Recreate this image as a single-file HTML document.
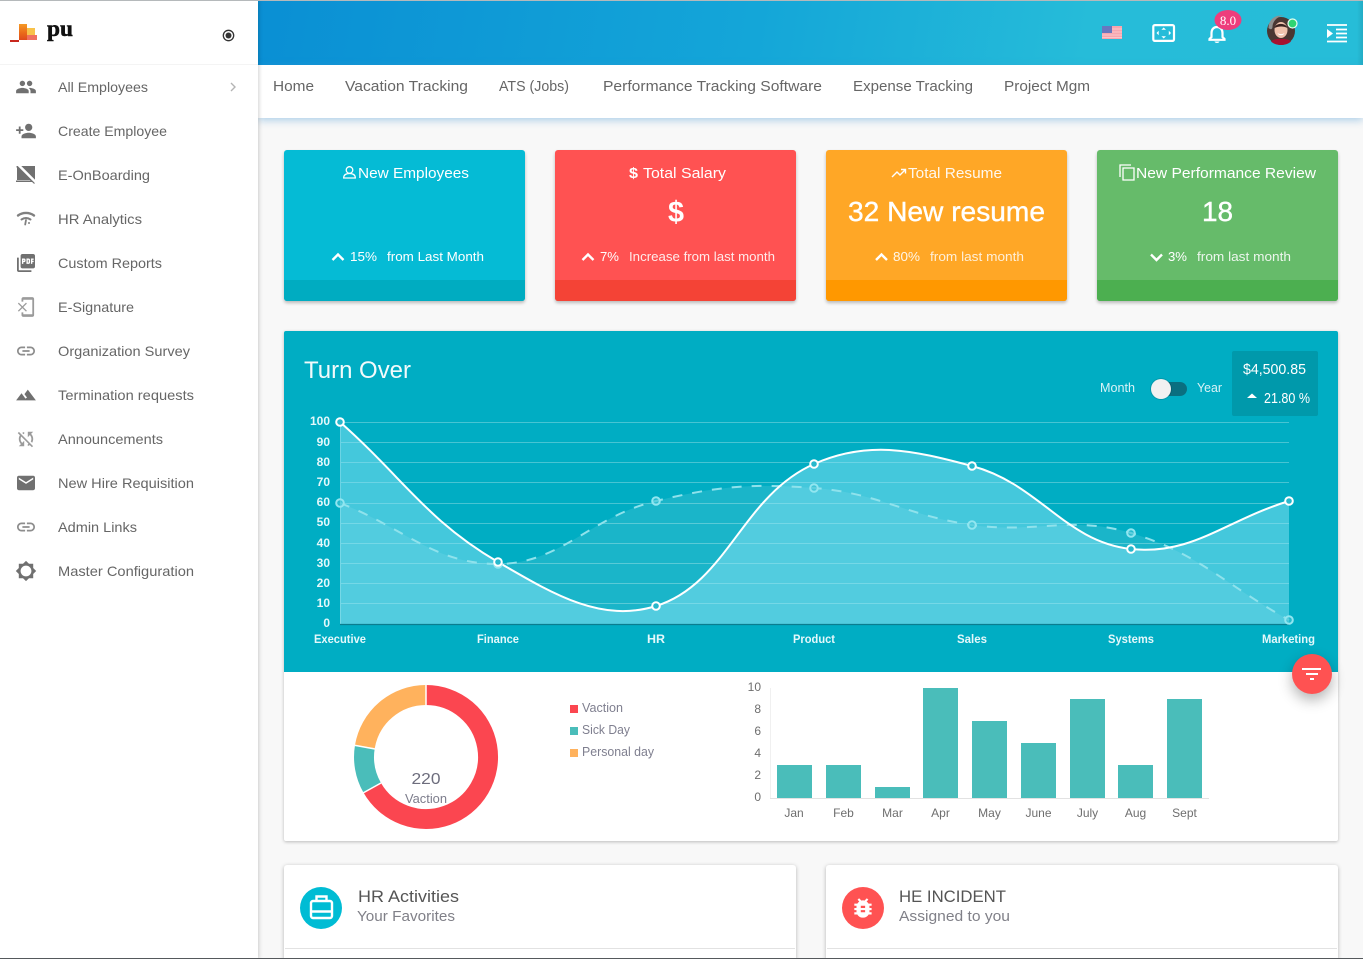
<!DOCTYPE html>
<html lang="en">
<head>
<meta charset="utf-8">
<title>HR Dashboard</title>
<style>
html,body{margin:0;padding:0;width:1363px;height:959px;overflow:hidden;background:#f8f8f8;font-family:"Liberation Sans",sans-serif}
#page{position:relative;width:1363px;height:959px;overflow:hidden;background:#f8f8f8}
.a{position:absolute}
#hdr{left:258px;top:0;width:1105px;height:65px;background:linear-gradient(100deg,#0a8fd4 0%,#14a6d8 45%,#26bcd9 75%,#26bdd8 100%)}
#nav{left:258px;top:65px;width:1105px;height:53px;background:#fff;box-shadow:0 2px 8px rgba(70,150,210,.45)}
#side{left:0;top:0;width:258px;height:959px;background:#fff;box-shadow:1px 0 4px rgba(0,0,0,.18)}
.card{width:241px;height:151px;top:150px;border-radius:3px;overflow:hidden;box-shadow:0 2px 3px rgba(0,0,0,.25)}
.card i{position:absolute;left:0;right:0;bottom:0;height:21px;display:block}
#panel{left:284px;top:331px;width:1054px;height:510px;background:#fff;border-radius:2px;box-shadow:0 1px 3px rgba(0,0,0,.25)}
#teal{left:284px;top:331px;width:1054px;height:341px;background:#00adc3;border-radius:2px 2px 0 0}
#stat{left:1232px;top:351px;width:86px;height:65px;background:#0099ab;border-radius:2px}
#fab{left:1292px;top:654px;width:40px;height:40px;border-radius:50%;background:#ff5252;box-shadow:0 6px 14px rgba(0,0,0,.3)}
.low{top:865px;width:512px;height:90px;background:#fff;border-radius:3px 3px 0 0;box-shadow:0 1px 4px rgba(0,0,0,.28)}
#edge{left:1357px;top:0;width:6px;height:65px;background:linear-gradient(90deg,rgba(0,0,0,0),rgba(0,0,0,.09))}
#top{left:0;top:0;width:1363px;height:1px;background:#b5b9bb}
#bot{left:0;top:958px;width:1363px;height:1px;background:#55595c}
svg{position:absolute;left:0;top:0}
.s text{font-size:14px;fill:#666}
.n text{font-size:15px;fill:#666}
.w text{fill:#fff}
.ax text{font-size:12px;font-weight:bold;fill:#e4f8fb}
.bx text{font-size:12px;fill:#6e6e6e}
</style>
</head>
<body>
<div id="page">
<div class="a" id="hdr"></div>
<div class="a" id="edge"></div>
<div class="a" id="nav"></div>
<div class="a" id="side"></div>
<div class="a card" style="left:284px;background:#05bbd5"><i style="background:#00acc1"></i></div>
<div class="a card" style="left:555px;background:#ff5252"><i style="background:#f44336"></i></div>
<div class="a card" style="left:826px;background:#ffa726"><i style="background:#ff9800"></i></div>
<div class="a card" style="left:1097px;background:#66bb6a"><i style="background:#4caf50"></i></div>
<div class="a" id="panel"></div>
<div class="a" id="teal"></div>
<div class="a" id="stat"></div>
<div class="a low" style="left:284px;height:94px"></div>
<div class="a low" style="left:826px;height:94px"></div>
<div class="a" style="left:285px;top:948px;width:510px;height:1px;background:#e2e2e2"></div>
<div class="a" style="left:827px;top:948px;width:510px;height:1px;background:#e2e2e2"></div>
<div class="a" id="fab"></div>

<svg width="1363" height="959" viewBox="0 0 1363 959" xmlns="http://www.w3.org/2000/svg">
<defs>
<linearGradient id="lg" x1="0" y1="0" x2="0" y2="1"><stop offset="0" stop-color="#f59a25"/><stop offset=".55" stop-color="#ea6a1a"/><stop offset="1" stop-color="#df4a1c"/></linearGradient>
</defs>
<!-- logo -->
<g>
<rect x="10" y="40" width="9" height="2" fill="#c8281e"/>
<rect x="19" y="24" width="8" height="16" fill="url(#lg)"/>
<rect x="27" y="28" width="8" height="7" fill="#f8c24a"/>
<rect x="27" y="35" width="10" height="5" fill="#f0705f"/>
<text x="47" y="36" font-family="'Liberation Serif',serif" font-weight="bold" font-size="23" fill="#111" stroke="#111" stroke-width=".5" textLength="26" lengthAdjust="spacingAndGlyphs">pu</text>
</g>
<circle cx="228.5" cy="35.5" r="5.2" fill="none" stroke="#333" stroke-width="1.3"/>
<circle cx="228.5" cy="35.5" r="3" fill="#333"/>
<rect x="0" y="64" width="258" height="1" fill="#f4f4f4"/>

<!-- sidebar text -->
<g class="s">
<text x="58" y="92" textLength="90" lengthAdjust="spacingAndGlyphs">All Employees</text>
<text x="58" y="136" textLength="109" lengthAdjust="spacingAndGlyphs">Create Employee</text>
<text x="58" y="180" textLength="92" lengthAdjust="spacingAndGlyphs">E-OnBoarding</text>
<text x="58" y="224" textLength="84" lengthAdjust="spacingAndGlyphs">HR Analytics</text>
<text x="58" y="268" textLength="104" lengthAdjust="spacingAndGlyphs">Custom Reports</text>
<text x="58" y="312" textLength="76" lengthAdjust="spacingAndGlyphs">E-Signature</text>
<text x="58" y="356" textLength="132" lengthAdjust="spacingAndGlyphs">Organization Survey</text>
<text x="58" y="400" textLength="136" lengthAdjust="spacingAndGlyphs">Termination requests</text>
<text x="58" y="444" textLength="105" lengthAdjust="spacingAndGlyphs">Announcements</text>
<text x="58" y="488" textLength="136" lengthAdjust="spacingAndGlyphs">New Hire Requisition</text>
<text x="58" y="532" textLength="79" lengthAdjust="spacingAndGlyphs">Admin Links</text>
<text x="58" y="576" textLength="136" lengthAdjust="spacingAndGlyphs">Master Configuration</text>
</g>
<path d="M231 83l4 4-4 4" fill="none" stroke="#b4b4b4" stroke-width="1.4"/>

<!-- sidebar icons -->
<g fill="#707070">
<path transform="translate(15.2 76.2) scale(.9)" d="M16 11c1.66 0 2.99-1.34 2.99-3S17.66 5 16 5c-1.66 0-3 1.34-3 3s1.34 3 3 3zm-8 0c1.66 0 2.99-1.34 2.99-3S9.66 5 8 5C6.34 5 5 6.34 5 8s1.34 3 3 3zm0 2c-2.33 0-7 1.17-7 3.5V19h14v-2.5c0-2.33-4.67-3.5-7-3.5zm8 0c-.29 0-.62.02-.97.05 1.16.84 1.97 1.97 1.97 3.45V19h6v-2.5c0-2.33-4.67-3.5-7-3.5z"/>
<path transform="translate(15.2 120.2) scale(.9)" d="M15 12c2.21 0 4-1.79 4-4s-1.79-4-4-4-4 1.79-4 4 1.79 4 4 4zm-9-2V7H4v3H1v2h3v3h2v-3h3v-2H6zm9 4c-2.67 0-8 1.34-8 4v2h16v-2c0-2.66-5.33-4-8-4z"/>
<g>
<rect x="17" y="166" width="18" height="14" fill="#707070"/>
<rect x="16" y="180.500" width="20" height="1.500" fill="#707070"/>
<path d="M18 164.500l18 18" stroke="#fff" stroke-width="2.600"/>
<path d="M16.500 166.500l18 17" stroke="#707070" stroke-width="1.200"/>
</g>
<g fill="none" stroke="#808080" stroke-linecap="round">
<path d="M18 215.500c4.500-3.400 11.500-3.400 16 0" stroke-width="2.400"/>
<path d="M21.500 219.500c2.800-1.900 6.200-1.900 9 0" stroke-width="2"/>
<path d="M26 220l-.8 4.500" stroke-width="1.800"/>
<circle cx="29" cy="223" r=".5" stroke-width="1"/>
</g>
<path transform="translate(15.2 252.2) scale(.9)" d="M20 2H8c-1.1 0-2 .9-2 2v12c0 1.1.9 2 2 2h12c1.1 0 2-.9 2-2V4c0-1.1-.9-2-2-2zm-8.5 7.5c0 .83-.67 1.5-1.5 1.5H9v2H7.5V7H10c.83 0 1.5.67 1.5 1.5v1zm5 2c0 .83-.67 1.5-1.5 1.5h-2.5V7H15c.83 0 1.5.67 1.5 1.5v3zm4-3H19v1h1.5V11H19v2h-1.5V7h3v1.5zM9 9.5h1v-1H9v1zM4 6H2v14c0 1.1.9 2 2 2h14v-2H4V6zm10 5.5h1v-3h-1v3z"/>
<path opacity=".7" transform="translate(15.2 296.2) scale(.9)" d="M13 8.2l-1-1-4 4-4-4-1 1 4 4-4 4 1 1 4-4 4 4 1-1-4-4 4-4zM19 1H9c-1.1 0-2 .9-2 2v3h2V4h10v16H9v-2H7v3c0 1.1.9 2 2 2h10c1.1 0 2-.9 2-2V3c0-1.1-.9-2-2-2z"/>
<path opacity=".8" transform="translate(15.2 340.2) scale(.9)" d="M3.9 12c0-1.71 1.39-3.1 3.1-3.1h4V7H7c-2.76 0-5 2.24-5 5s2.24 5 5 5h4v-1.9H7c-1.71 0-3.1-1.39-3.1-3.1zM8 13h8v-2H8v2zm9-6h-4v1.9h4c1.71 0 3.1 1.39 3.1 3.1s-1.39 3.1-3.1 3.1h-4V17h4c2.76 0 5-2.24 5-5s-2.24-5-5-5z"/>
<path transform="translate(15.2 384.2) scale(.9)" d="M14 6l-3.75 5 2.85 3.8-1.6 1.2C9.81 13.75 7 10 7 10l-6 8h22L14 6z"/>
<path opacity=".7" transform="translate(15.2 428.2) scale(.9)" d="M10 6.35V4.26c-.8.21-1.55.54-2.23.96l1.46 1.46c.25-.12.5-.24.77-.33zm-7.14-.94l2.36 2.36C4.45 8.99 4 10.44 4 12c0 2.21.91 4.2 2.36 5.64L4 20h6v-6l-2.24 2.24C6.68 15.15 6 13.66 6 12c0-1 .25-1.94.68-2.77l8.08 8.08c-.25.13-.5.25-.77.34v2.09c.8-.21 1.55-.54 2.23-.96l2.36 2.36 1.27-1.27L4.14 4.14 2.86 5.41zM20 4h-6v6l2.24-2.24C17.32 8.85 18 10.34 18 12c0 1-.25 1.94-.68 2.77l1.46 1.46C19.55 15.01 20 13.56 20 12c0-2.21-.91-4.2-2.36-5.64L20 4z"/>
<path transform="translate(15.2 472.2) scale(.9)" d="M20 4H4c-1.1 0-1.99.9-1.99 2L2 18c0 1.1.9 2 2 2h16c1.1 0 2-.9 2-2V6c0-1.1-.9-2-2-2zm0 4l-8 5-8-5V6l8 5 8-5v2z"/>
<path opacity=".8" transform="translate(15.2 516.2) scale(.9)" d="M3.9 12c0-1.71 1.39-3.1 3.1-3.1h4V7H7c-2.76 0-5 2.24-5 5s2.24 5 5 5h4v-1.9H7c-1.71 0-3.1-1.39-3.1-3.1zM8 13h8v-2H8v2zm9-6h-4v1.9h4c1.71 0 3.1 1.39 3.1 3.1s-1.39 3.1-3.1 3.1h-4V17h4c2.76 0 5-2.24 5-5s-2.24-5-5-5z"/>
<path transform="translate(15.2 560.2) scale(.9)" d="M20 8.69V4h-4.69L12 .69 8.69 4H4v4.69L.69 12 4 15.31V20h4.69L12 23.31 15.31 20H20v-4.69L23.31 12 20 8.69zM12 18c-3.31 0-6-2.69-6-6s2.69-6 6-6 6 2.69 6 6-2.69 6-6 6z"/>
</g>

<!-- header icons -->
<g>
<rect x="1102" y="26" width="20" height="13" fill="#f8a5ae"/>
<rect x="1102" y="28.500" width="20" height="1" fill="#fbc6cb"/>
<rect x="1102" y="31.500" width="20" height="1" fill="#fbc6cb"/>
<rect x="1102" y="34.500" width="20" height="1" fill="#fbc6cb"/>
<rect x="1102" y="37" width="20" height="1" fill="#fbc6cb"/>
<rect x="1102" y="26" width="10" height="7" fill="#6877bf"/>
<rect x="1153.300" y="25.100" width="20.700" height="15.800" rx="1.500" fill="none" stroke="#fff" stroke-width="2.200"/>
<path d="M1163.700 27.500l-2.300 2.200h4.600zM1163.700 38.500l-2.300-2.200h4.600zM1156.500 33l2.200-2.300v4.600zM1171 33l-2.200-2.300v4.600z" fill="#fff"/>
<path d="M1217 27c-3.600 0-5.500 2.700-5.500 6v4l-2 2v.8h15V39l-2-2v-4c0-3.300-1.900-6-5.500-6z" fill="none" stroke="#fff" stroke-width="2.200"/>
<path d="M1214.500 41.500h5c-.3 1-1.200 1.500-2.500 1.500s-2.200-.5-2.500-1.500z" fill="#fff"/>
<ellipse cx="1228" cy="20" rx="13.500" ry="10" fill="#ee3d7c"/>
<text x="1228" y="25" text-anchor="middle" font-family="'Liberation Serif',serif" font-size="13" fill="#fff">8.0</text>
<circle cx="1281" cy="31" r="14" fill="#4a3733"/>
<path d="M1268.500 28c0-8 6-12.500 12.500-12.500 2 0 3 .3 3 .3-5 0-11 4-11.500 11-.1 3-2 3-4 1.200z" fill="#8f8f8f"/>
<path d="M1271 41.500c2-3.500 18-3.500 20 0-2.500 2.300-6 3.500-10 3.500s-7.500-1.200-10-3.500z" fill="#a5122f"/>
<ellipse cx="1281" cy="30" rx="6.500" ry="8" fill="#efc2ad"/>
<path d="M1274.500 28c1-5.500 11.500-5.500 13 0-3.500-2-9-2-13 0z" fill="#3a2220"/>
<path d="M1277.500 33c2.300 1.500 4.700 1.500 7 0-1 3-6 3-7 0z" fill="#fff"/>
<circle cx="1292.500" cy="23.500" r="4.500" fill="#2ed573" stroke="#e8fff2" stroke-width="1.200"/>
<path d="M1327 25h20M1336 29.500h11M1336 33.500h11M1336 37.500h11M1327 41.500h20" stroke="#fff" stroke-width="1.800" fill="none"/>
<path d="M1327 29l6 4.500-6 4.500z" fill="#fff"/>
</g>

<!-- nav -->
<g class="n">
<text x="273" y="91" textLength="41" lengthAdjust="spacingAndGlyphs">Home</text>
<text x="345" y="91" textLength="123" lengthAdjust="spacingAndGlyphs">Vacation Tracking</text>
<text x="499" y="91" textLength="70" lengthAdjust="spacingAndGlyphs">ATS (Jobs)</text>
<text x="603" y="91" textLength="219" lengthAdjust="spacingAndGlyphs">Performance Tracking Software</text>
<text x="853" y="91" textLength="120" lengthAdjust="spacingAndGlyphs">Expense Tracking</text>
<text x="1004" y="91" textLength="86" lengthAdjust="spacingAndGlyphs">Project Mgm</text>
</g>

<!-- stat cards -->
<g class="w" font-size="15">
<circle cx="349.500" cy="170" r="3.300" fill="none" stroke="#fff" stroke-width="1.300"/>
<path d="M343.700 178c0-3.500 2.500-4.500 5.800-4.500s5.800 1 5.800 4.500z" fill="none" stroke="#fff" stroke-width="1.300"/>
<text x="358" y="178" textLength="111" lengthAdjust="spacingAndGlyphs">New Employees</text>
<text x="629" y="178" font-weight="bold" textLength="9" lengthAdjust="spacingAndGlyphs">$</text>
<text x="643" y="178" textLength="83" lengthAdjust="spacingAndGlyphs">Total Salary</text>
<path d="M892 177l5-5 3 3 5-5M901 169.500h4.500v4" fill="none" stroke="#fff" stroke-width="1.400"/>
<text x="908" y="178" opacity=".92" textLength="94" lengthAdjust="spacingAndGlyphs">Total Resume</text>
<path d="M1120 177v-12h11M1123 168h11v12h-11z" fill="none" stroke="#fff" stroke-width="1.300"/>
<text x="1136" y="178" textLength="180" lengthAdjust="spacingAndGlyphs">New Performance Review</text>

<text x="676" y="222" text-anchor="middle" font-size="30" font-weight="bold" textLength="16" lengthAdjust="spacingAndGlyphs">$</text>
<text x="848" y="221" font-size="28" textLength="197" lengthAdjust="spacingAndGlyphs" stroke="#fff" stroke-width=".4">32 New resume</text>
<text x="1202" y="221" font-size="28" textLength="31" lengthAdjust="spacingAndGlyphs" stroke="#fff" stroke-width=".4">18</text>

<g font-size="13">
<text x="350" y="261" textLength="27" lengthAdjust="spacingAndGlyphs">15%</text>
<text x="387" y="261" textLength="97" lengthAdjust="spacingAndGlyphs">from Last Month</text>
<text x="600" y="261" textLength="19" lengthAdjust="spacingAndGlyphs">7%</text>
<text x="629" y="261" opacity=".88" textLength="146" lengthAdjust="spacingAndGlyphs">Increase from last month</text>
<text x="893" y="261" opacity=".9" textLength="27" lengthAdjust="spacingAndGlyphs">80%</text>
<text x="930" y="261" opacity=".82" textLength="94" lengthAdjust="spacingAndGlyphs">from last month</text>
<text x="1168" y="261" textLength="19" lengthAdjust="spacingAndGlyphs">3%</text>
<text x="1197" y="261" opacity=".88" textLength="94" lengthAdjust="spacingAndGlyphs">from last month</text>
</g>
<g fill="none" stroke="#fff" stroke-width="2.400">
<path d="M332.500 260l5.500-5.500 5.500 5.500"/>
<path d="M582.500 260l5.500-5.500 5.500 5.500"/>
<path d="M876 260l5.500-5.500 5.500 5.500"/>
<path d="M1151 254.500l5.500 5.500 5.500-5.500"/>
</g>
</g>

<!-- turn over header -->
<g class="w">
<text x="304" y="378" font-size="24" opacity=".95" textLength="107" lengthAdjust="spacingAndGlyphs">Turn Over</text>
<text x="1100" y="392" font-size="12.500" opacity=".85" textLength="35" lengthAdjust="spacingAndGlyphs">Month</text>
<text x="1197" y="392" font-size="12.500" opacity=".85" textLength="25" lengthAdjust="spacingAndGlyphs">Year</text>
<rect x="1155" y="382" width="32" height="14" rx="7" fill="#0a6f80"/>
<circle cx="1161" cy="389" r="11" fill="#000" opacity=".12"/>
<circle cx="1161" cy="389" r="10" fill="#f1f1f1"/>
<text x="1243" y="374" font-size="14.500" textLength="63" lengthAdjust="spacingAndGlyphs">$4,500.85</text>
<path d="M1247 398l5-4.500 5 4.500z" fill="#fff"/>
<text x="1264" y="403" font-size="14.500" textLength="46" lengthAdjust="spacingAndGlyphs">21.80 %</text>
</g>

<!-- line chart -->
<g stroke="#fff" stroke-opacity=".28" stroke-width="1">
<path d="M340 422.500H1289M340 442.500H1289M340 462.500H1289M340 482.500H1289M340 503.500H1289M340 523.500H1289M340 543.500H1289M340 563.500H1289M340 583.500H1289M340 603.500H1289M340.500 422V624"/>
</g>
<path d="M340,503 C403.2,527.4 434.8,564.4 498,564 C561.2,563.6 590.6,516.7 656,501 C717,486.3 751.4,483.2 814,488 C877.8,492.8 908,515.9 972,525 C1034.8,533.9 1071.4,515.1 1131,533 C1198.2,553.1 1225.8,585.2 1289,620 L1289,624 L340,624Z" fill="#fff" fill-opacity=".1"/>
<path d="M340,422 C403.2,478 426.9,520.6 498,562 C553.3,594.2 601,623.1 656,606 C727.4,583.9 741.6,496.1 814,464 C868,440.1 912.7,450.1 972,466 C1039.5,484.1 1065.1,541.7 1131,549 C1191.9,555.7 1225.8,520.2 1289,501 L1289,624 L340,624Z" fill="#96e8fa" fill-opacity=".45"/>
<path d="M340,503 C403.2,527.4 434.8,564.4 498,564 C561.2,563.6 590.6,516.7 656,501 C717,486.3 751.4,483.2 814,488 C877.8,492.8 908,515.9 972,525 C1034.8,533.9 1071.4,515.1 1131,533 C1198.2,553.1 1225.8,585.2 1289,620" fill="none" stroke="#8fe2ec" stroke-width="2" stroke-dasharray="10 10"/>
<path d="M340,422 C403.2,478 426.9,520.6 498,562 C553.3,594.2 601,623.1 656,606 C727.4,583.9 741.6,496.1 814,464 C868,440.1 912.7,450.1 972,466 C1039.5,484.1 1065.1,541.7 1131,549 C1191.9,555.7 1225.8,520.2 1289,501" fill="none" stroke="#fff" stroke-width="2"/>
<path d="M340 624.500H1289" stroke="#0a7d8f" stroke-width="1.200"/>
<g fill="#3dc3d6" fill-opacity=".6" stroke="#92e6f0" stroke-width="2">
<circle cx="340" cy="503" r="3.800"/><circle cx="498" cy="564" r="3.800"/><circle cx="656" cy="501" r="3.800"/><circle cx="814" cy="488" r="3.800"/><circle cx="972" cy="525" r="3.800"/><circle cx="1131" cy="533" r="3.800"/><circle cx="1289" cy="620" r="3.800"/>
</g>
<g fill="#27b8cc" stroke="#fff" stroke-width="2">
<circle cx="340" cy="422" r="3.800"/><circle cx="498" cy="562" r="3.800"/><circle cx="656" cy="606" r="3.800"/><circle cx="814" cy="464" r="3.800"/><circle cx="972" cy="466" r="3.800"/><circle cx="1131" cy="549" r="3.800"/><circle cx="1289" cy="501" r="3.800"/>
</g>
<g class="ax" text-anchor="end">
<text x="330" y="425">100</text><text x="330" y="446">90</text><text x="330" y="466">80</text><text x="330" y="486">70</text><text x="330" y="506">60</text><text x="330" y="526">50</text><text x="330" y="547">40</text><text x="330" y="567">30</text><text x="330" y="587">20</text><text x="330" y="607">10</text><text x="330" y="627">0</text>
</g>
<g class="ax">
<text x="314" y="643" textLength="52" lengthAdjust="spacingAndGlyphs">Executive</text>
<text x="477" y="643" textLength="42" lengthAdjust="spacingAndGlyphs">Finance</text>
<text x="647" y="643" textLength="18" lengthAdjust="spacingAndGlyphs">HR</text>
<text x="793" y="643" textLength="42" lengthAdjust="spacingAndGlyphs">Product</text>
<text x="957" y="643" textLength="30" lengthAdjust="spacingAndGlyphs">Sales</text>
<text x="1108" y="643" textLength="46" lengthAdjust="spacingAndGlyphs">Systems</text>
<text x="1262" y="643" textLength="53" lengthAdjust="spacingAndGlyphs">Marketing</text>
</g>

<!-- donut -->
<g fill="none" stroke-width="20">
<path d="M426 695A62 62 0 1 1 372 787.400" stroke="#fb4650"/>
<path d="M372 787.400A62 62 0 0 1 364.900 746.600" stroke="#4abdba"/>
<path d="M364.900 746.600A62 62 0 0 1 426 695" stroke="#ffb25d"/>
</g>
<g stroke="#fff" stroke-width="1.500">
<path d="M426 684V706M381 783L363 793M375 749L353 745"/>
</g>
<text x="426" y="784" text-anchor="middle" font-size="16" fill="#6d6d7d" textLength="29" lengthAdjust="spacingAndGlyphs">220</text>
<text x="426" y="803" text-anchor="middle" font-size="12.500" fill="#7d7d8c" textLength="42" lengthAdjust="spacingAndGlyphs">Vaction</text>
<rect x="570" y="705" width="8" height="8" fill="#fb4650"/>
<rect x="570" y="727" width="8" height="8" fill="#4abdba"/>
<rect x="570" y="749" width="8" height="8" fill="#ffb25d"/>
<g font-size="13" fill="#7f7f8f">
<text x="582" y="712" textLength="41" lengthAdjust="spacingAndGlyphs">Vaction</text>
<text x="582" y="734" textLength="48" lengthAdjust="spacingAndGlyphs">Sick Day</text>
<text x="582" y="756" textLength="72" lengthAdjust="spacingAndGlyphs">Personal day</text>
</g>

<!-- bars -->
<path d="M770.500 688V798" stroke="#f0f0f0"/>
<path d="M770 798.500H1209" stroke="#e2e2e2"/>
<g fill="#4abdba">
<rect x="777" y="765" width="35" height="33"/>
<rect x="826" y="765" width="35" height="33"/>
<rect x="875" y="787" width="35" height="11"/>
<rect x="923" y="688" width="35" height="110"/>
<rect x="972" y="721" width="35" height="77"/>
<rect x="1021" y="743" width="35" height="55"/>
<rect x="1070" y="699" width="35" height="99"/>
<rect x="1118" y="765" width="35" height="33"/>
<rect x="1167" y="699" width="35" height="99"/>
</g>
<g class="bx" text-anchor="end">
<text x="761" y="691">10</text><text x="761" y="713">8</text><text x="761" y="735">6</text><text x="761" y="757">4</text><text x="761" y="779">2</text><text x="761" y="801">0</text>
</g>
<g class="bx" text-anchor="middle">
<text x="794" y="817">Jan</text><text x="843.500" y="817">Feb</text><text x="892.500" y="817">Mar</text><text x="940.500" y="817">Apr</text><text x="989.500" y="817">May</text><text x="1038.500" y="817">June</text><text x="1087.500" y="817">July</text><text x="1135.500" y="817">Aug</text><text x="1184.500" y="817">Sept</text>
</g>

<!-- fab icon -->
<path d="M1302 669h19M1306 674h12M1310 679h4" stroke="#fff" stroke-width="2" fill="none"/>

<!-- lower cards -->
<circle cx="321" cy="908" r="21" fill="#00bcd4"/>
<g fill="none" stroke="#fff" stroke-width="2.400">
<rect x="311" y="901" width="21" height="17" rx="2"/>
<path d="M316.500 901v-4.500h10v4.500"/>
<path d="M311 911.500h21" stroke-width="2.600"/>
</g>
<circle cx="863" cy="908" r="21" fill="#ff5252"/>
<path transform="translate(850 895) scale(1.080)" fill="#fff" d="M20 8h-2.810c-.45-.78-1.070-1.450-1.820-1.960L17 4.410 15.590 3l-2.170 2.170C12.960 5.060 12.490 5 12 5c-.49 0-.96.06-1.410.17L8.410 3 7 4.410l1.620 1.630C7.880 6.550 7.260 7.220 6.810 8H4v2h2.090c-.05.33-.09.66-.09 1v1H4v2h2v1c0 .34.04.67.09 1H4v2h2.810c1.040 1.790 2.970 3 5.190 3s4.150-1.210 5.190-3H20v-2h-2.090c.05-.33.09-.66.09-1v-1h2v-2h-2v-1c0-.34-.04-.67-.09-1H20V8zm-6 8h-4v-2h4v2zm0-4h-4v-2h4v2z"/>
<g font-size="17" fill="#555">
<text x="358" y="902" textLength="101" lengthAdjust="spacingAndGlyphs">HR Activities</text>
<text x="899" y="902" textLength="107" lengthAdjust="spacingAndGlyphs">HE INCIDENT</text>
</g>
<g font-size="15" fill="#808088">
<text x="357" y="921" textLength="98" lengthAdjust="spacingAndGlyphs">Your Favorites</text>
<text x="899" y="921" textLength="111" lengthAdjust="spacingAndGlyphs">Assigned to you</text>
</g>
</svg>
<div class="a" id="top"></div>
<div class="a" id="bot"></div>
</div>
</body>
</html>
